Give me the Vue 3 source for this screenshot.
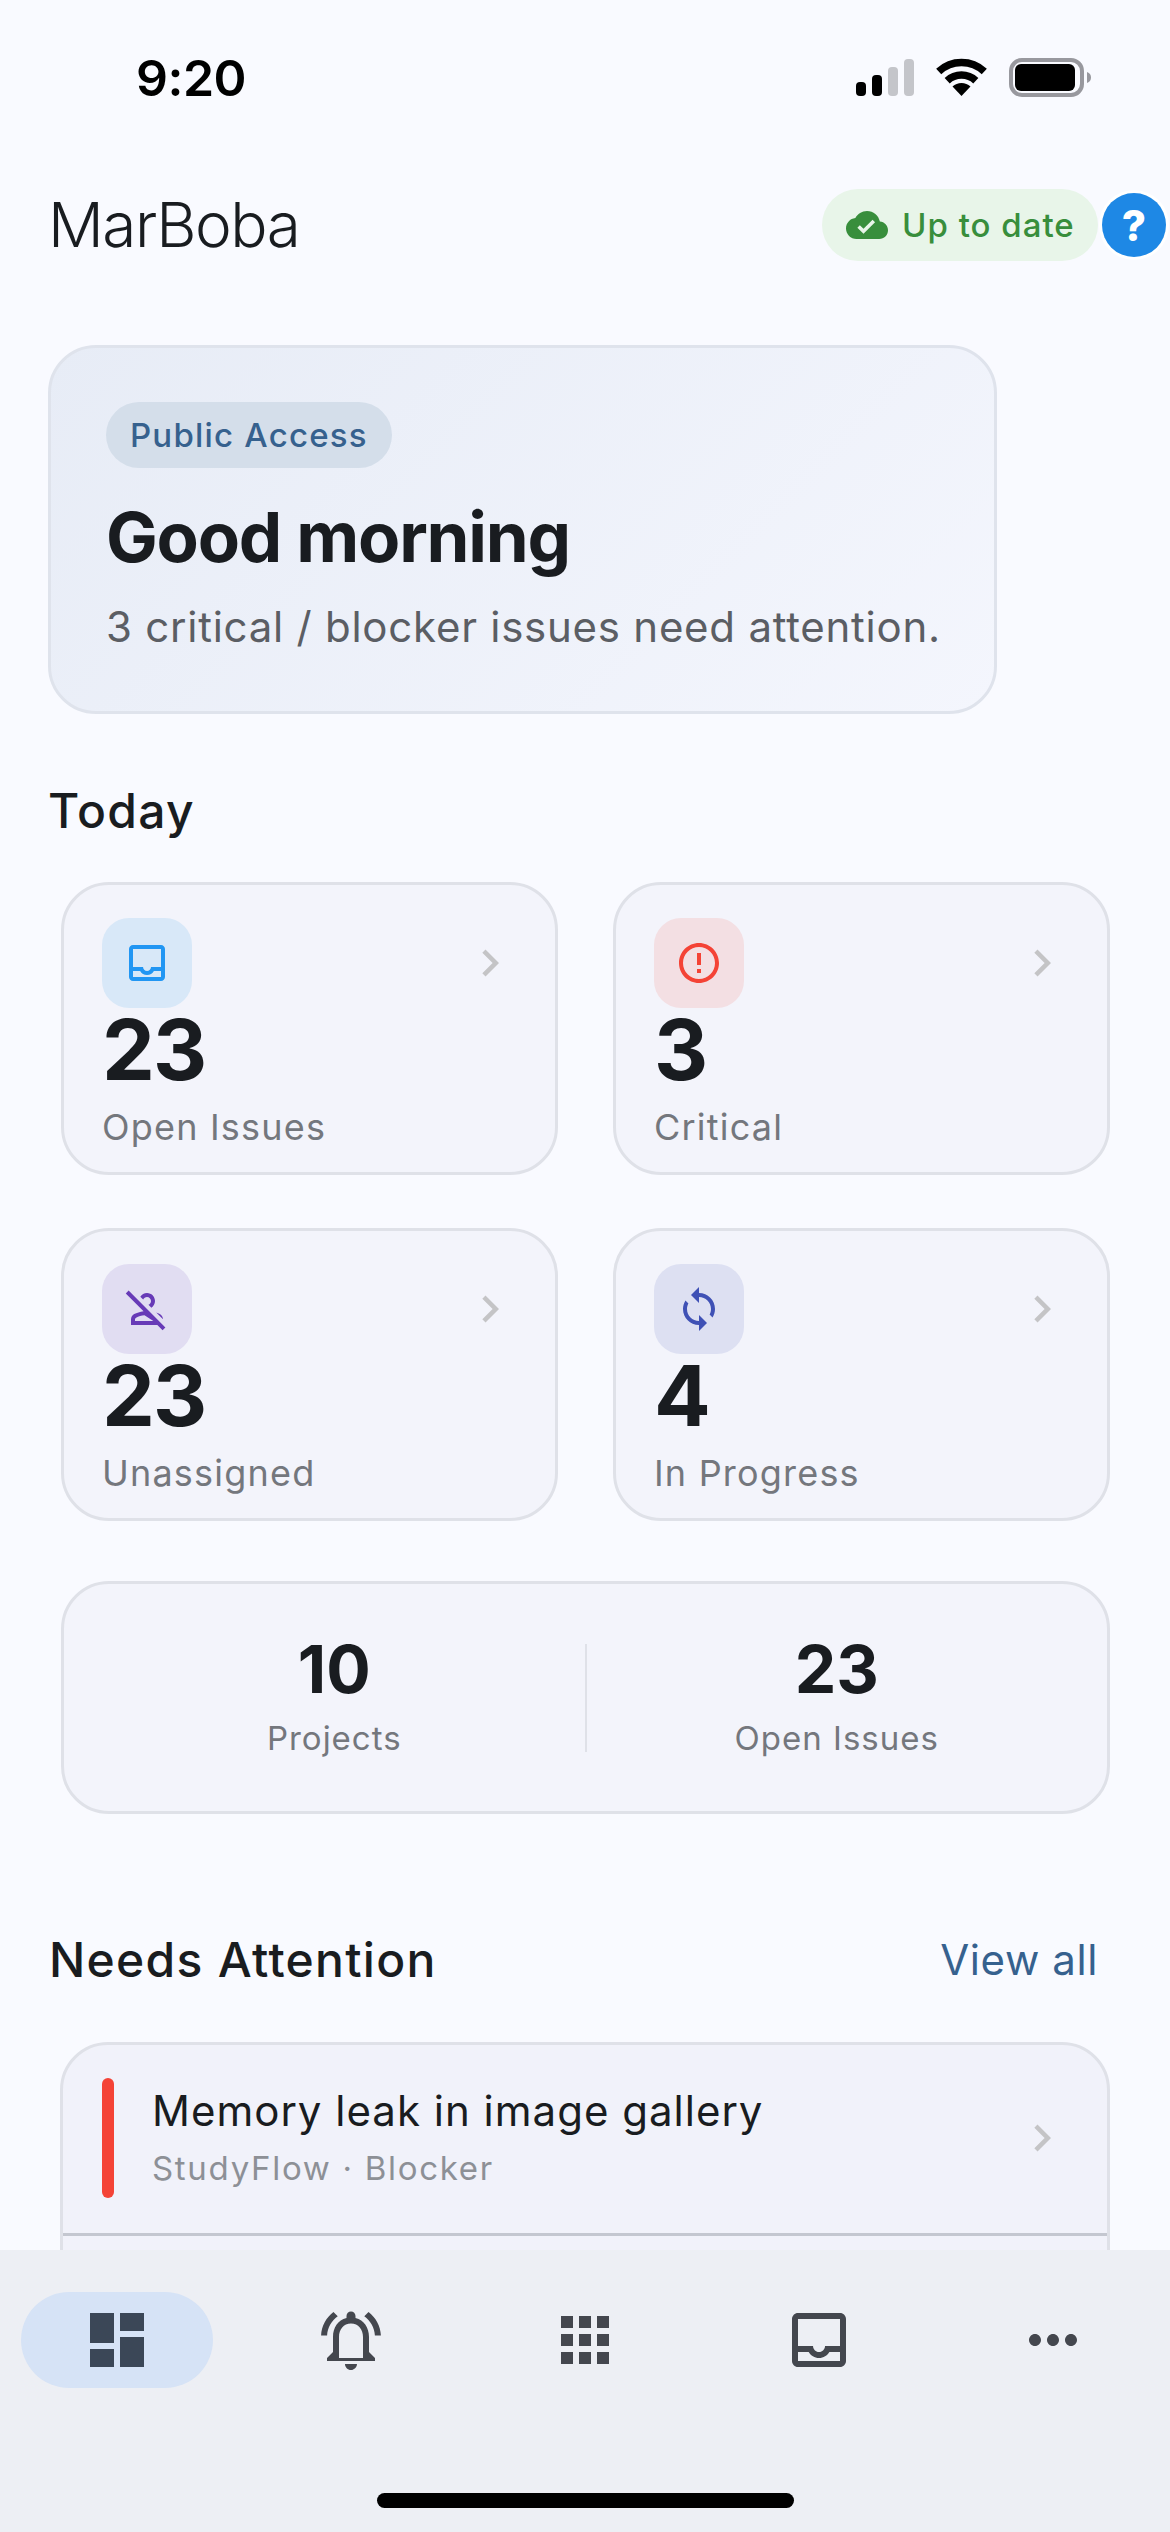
<script setup>
const cards = [
  { value: "23", label: "Open Issues", tone: "blue", path: "M19 3H5c-1.1 0-2 .9-2 2v14c0 1.1.9 2 2 2h14c1.1 0 2-.9 2-2V5c0-1.1-.9-2-2-2zm0 16H5v-3h3.56c.69 1.19 1.97 2 3.45 2s2.75-.81 3.45-2H19v3zm0-5h-4.99c0 1.1-.9 2-2 2s-2-.9-2-2H5V5h14v9z" },
  { value: "3", label: "Critical", tone: "red", path: "M11 15h2v2h-2zm0-8h2v6h-2zm.99-5C6.47 2 2 6.48 2 12s4.47 10 9.99 10C17.52 22 22 17.52 22 12S17.52 2 11.99 2zM12 20c-4.42 0-8-3.58-8-8s3.58-8 8-8 8 3.58 8 8-3.58 8-8 8z" },
  { value: "23", label: "Unassigned", tone: "purple", path: "M8.65 5.82C9.36 4.72 10.6 4 12 4c2.21 0 4 1.79 4 4 0 1.4-.72 2.64-1.82 3.35l-1.44-1.44C13.49 9.55 14 8.84 14 8c0-1.1-.9-2-2-2-.84 0-1.55.51-1.91 1.26L8.65 5.82zM20 17.17c-.02-1.1-.63-2.11-1.61-2.62-.54-.28-1.13-.54-1.77-.76L20 17.17zm1.19 4.02L2.81 2.81 1.39 4.22l8.89 8.89c-1.81.23-3.39.79-4.67 1.45C4.61 15.07 4 16.1 4 17.22V20h13.17l2.61 2.61 1.41-1.42zM6 18v-.78c0-.38.2-.72.52-.88 1.29-.66 2.69-1.09 4.21-1.24l.01-.01L15.17 18H6z" },
  { value: "4", label: "In Progress", tone: "indigo", path: "M12 4V1L8 5l4 4V6c3.31 0 6 2.69 6 6 0 1.01-.25 1.97-.7 2.8l1.46 1.46C19.54 15.03 20 13.57 20 12c0-4.42-3.58-8-8-8zm0 14c-3.31 0-6-2.69-6-6 0-1.01.25-1.97.7-2.8L5.24 7.74C4.46 8.97 4 10.43 4 12c0 4.42 3.58 8 8 8v3l4-4-4-4v3z" },
]

const tabs = [
  { active: true, tone: "dark", path: "M3 13h8V3H3v10zm0 8h8v-6H3v6zm10 0h8V11h-8v10zm0-18v6h8V3h-8z" },
  { path: "M7.58 4.08L6.15 2.65C3.75 4.48 2.17 7.3 2.03 10.5h2c.15-2.65 1.51-4.97 3.55-6.42zm12.39 6.42h2c-.15-3.2-1.73-6.02-4.12-7.85l-1.42 1.43c2.02 1.45 3.39 3.77 3.54 6.42zM18 11c0-3.07-1.64-5.64-4.5-6.32V4c0-.83-.67-1.5-1.5-1.5s-1.5.67-1.5 1.5v.68C7.63 5.36 6 7.92 6 11v5l-2 2v1h16v-1l-2-2v-5zm-6 11c.14 0 .27-.01.4-.04.65-.14 1.18-.58 1.44-1.18.1-.24.15-.5.15-.78h-4c.01 1.1.9 2 2.01 2zm4-4H8v-7c0-2.48 1.51-4.5 4-4.5s4 2.02 4 4.5v7z" },
  { path: "M4 8h4V4H4v4zm6 12h4v-4h-4v4zm-6 0h4v-4H4v4zm0-6h4v-4H4v4zm6 0h4v-4h-4v4zm6-10v4h4V4h-4zm-6 4h4V4h-4v4zm6 6h4v-4h-4v4zm0 6h4v-4h-4v4z" },
  { path: "M19 3H5c-1.1 0-2 .9-2 2v14c0 1.1.9 2 2 2h14c1.1 0 2-.9 2-2V5c0-1.1-.9-2-2-2zm0 16H5v-3h3.56c.69 1.19 1.97 2 3.45 2s2.75-.81 3.45-2H19v3zm0-5h-4.99c0 1.1-.9 2-2 2s-2-.9-2-2H5V5h14v9z" },
  { path: "M6 10c-1.1 0-2 .9-2 2s.9 2 2 2 2-.9 2-2-.9-2-2-2zm12 0c-1.1 0-2 .9-2 2s.9 2 2 2 2-.9 2-2-.9-2-2-2zm-6 0c-1.1 0-2 .9-2 2s.9 2 2 2 2-.9 2-2-.9-2-2-2z" },
]

const chevron = "M10 6L8.59 7.41 13.17 12l-4.58 4.59L10 18l6-6z"
</script>

<template>
  <div class="screen">
    <div class="status">
      <span class="time">9:20</span>
      <svg class="status-icons" width="236" height="40" viewBox="0 0 236 40">
        <rect x="0" y="24" width="10" height="14" rx="4" fill="#000" />
        <rect x="16" y="17" width="10" height="21" rx="4" fill="#000" />
        <rect x="32" y="9" width="10" height="29" rx="4" fill="#c4c5ca" />
        <rect x="48" y="1" width="10" height="37" rx="4" fill="#c4c5ca" />
        <path d="M82.7 13.5A33.5 33.5 0 0 1 128.3 13.5" fill="none" stroke="#000" stroke-width="7.5" />
        <path d="M91.2 22.7A21 21 0 0 1 119.8 22.7" fill="none" stroke="#000" stroke-width="7.5" />
        <path d="M105.5 38L96.5 28.5A13 13 0 0 1 114.5 28.5Z" fill="#000" />
        <rect x="155" y="2" width="71" height="35" rx="11" fill="none" stroke="#98989e" stroke-width="4" />
        <rect x="159" y="6" width="60" height="27" rx="6" fill="#000" />
        <path d="M231 14C234 15 235 17 235 19.5S234 24 231 25Z" fill="#98989e" />
      </svg>
    </div>

    <div class="main">
      <header class="header">
        <h1 class="brand">MarBoba</h1>
        <div class="header-right">
          <div class="sync">
            <svg width="42" height="42" viewBox="0 0 24 24" fill="#388e3c">
              <path d="M19.35 10.04C18.67 6.59 15.64 4 12 4 9.11 4 6.6 5.64 5.35 8.04 2.34 8.36 0 10.91 0 14c0 3.31 2.69 6 6 6h13c2.76 0 5-2.24 5-5 0-2.64-2.05-4.78-4.65-4.96zM10 17l-3.5-3.5 1.41-1.41L10 14.17l5.18-5.18 1.41 1.41L10 17z" />
            </svg>
            <span>Up to date</span>
          </div>
          <div class="help">?</div>
        </div>
      </header>

      <section class="hero">
        <span class="badge">Public Access</span>
        <h2 class="greeting">Good morning</h2>
        <p class="hero-sub">3 critical / blocker issues need attention.</p>
      </section>

      <h3 class="section-title today">Today</h3>

      <div class="grid">
        <div v-for="card in cards" :key="card.label" class="card">
          <div class="card-top">
            <div class="icon-box" :class="card.tone">
              <svg width="48" height="48" viewBox="0 0 24 24" fill="currentColor"><path :d="card.path" /></svg>
            </div>
            <svg class="chevron" width="54" height="54" viewBox="0 0 24 24" fill="currentColor"><path :d="chevron" /></svg>
          </div>
          <div class="card-value">{{ card.value }}</div>
          <div class="card-label">{{ card.label }}</div>
        </div>
      </div>

      <div class="totals">
        <div class="total">
          <div class="total-value">10</div>
          <div class="total-label">Projects</div>
        </div>
        <div class="total-divider"></div>
        <div class="total">
          <div class="total-value">23</div>
          <div class="total-label">Open Issues</div>
        </div>
      </div>

      <div class="section-head">
        <h3 class="section-title">Needs Attention</h3>
        <span class="view-all">View all</span>
      </div>

      <div class="issues">
        <div class="issue">
          <div class="issue-bar"></div>
          <div class="issue-text">
            <div class="issue-title">Memory leak in image gallery</div>
            <div class="issue-meta">StudyFlow · Blocker</div>
          </div>
          <svg class="chevron" width="54" height="54" viewBox="0 0 24 24" fill="currentColor"><path :d="chevron" /></svg>
        </div>
      </div>
    </div>

    <nav class="nav">
      <div class="tabs">
        <div v-for="(tab, i) in tabs" :key="i" class="tab">
          <div class="tab-inner" :class="{ active: tab.active }">
            <svg width="72" height="72" viewBox="0 0 24 24" fill="currentColor"><path :d="tab.path" /></svg>
          </div>
        </div>
      </div>
      <div class="home-indicator"></div>
    </nav>
  </div>
</template>

<style scoped>
.screen {
  width: 1170px;
  height: 2532px;
  display: flex;
  flex-direction: column;
  overflow: hidden;
  background: #f9faff;
  color: #191c20;
  font-family: Inter, "Noto Sans", sans-serif;
}
.status {
  height: 150px;
  flex: none;
  display: flex;
  justify-content: space-between;
  align-items: flex-start;
  padding: 58px 78px 0 136px;
  box-sizing: border-box;
}
.time {
  font-size: 50px;
  line-height: 40px;
  font-weight: 600;
  letter-spacing: -0.5px;
  color: #000;
}
.main {
  flex: 1;
  min-height: 0;
  overflow: hidden;
}
.header {
  height: 150px;
  display: flex;
  align-items: center;
  justify-content: space-between;
  padding: 0 4px 0 48px;
}
.brand {
  margin: 0;
  font-size: 62px;
  line-height: 80px;
  font-weight: 300;
  letter-spacing: -1.5px;
}
.header-right {
  display: flex;
  align-items: center;
  gap: 4px;
}
.sync {
  width: 276px;
  height: 72px;
  box-sizing: border-box;
  padding-left: 24px;
  display: flex;
  align-items: center;
  gap: 14px;
  border-radius: 36px;
  background: #e8f5e9;
  color: #388e3c;
  font-size: 33px;
  font-weight: 500;
  letter-spacing: 1px;
}
.help {
  width: 64px;
  height: 64px;
  border-radius: 50%;
  background: #1e88e5;
  box-shadow: 0 0 0 3px #fff;
  color: #fff;
  font-size: 42px;
  font-weight: 800;
  display: flex;
  align-items: center;
  justify-content: center;
}
.hero {
  width: fit-content;
  margin: 45px 0 0 48px;
  padding: 54px 53px 54px 55px;
  border: 3px solid #dfe3ec;
  border-radius: 48px;
  background: linear-gradient(135deg, #e7ecf6, #f4f6fd);
}
.badge {
  display: inline-block;
  height: 66px;
  line-height: 66px;
  padding: 0 24px;
  border-radius: 33px;
  background: #d4deea;
  color: #36618e;
  font-size: 33px;
  font-weight: 500;
  letter-spacing: 1.2px;
}
.greeting {
  margin: 27px 0 0;
  font-size: 69px;
  line-height: 84px;
  font-weight: 700;
  letter-spacing: -1.2px;
}
.hero-sub {
  margin: 18px 0 0;
  font-size: 42px;
  line-height: 60px;
  color: #5b5e64;
  letter-spacing: 0.75px;
}
.section-title {
  margin: 0;
  font-size: 48px;
  line-height: 60px;
  font-weight: 500;
  letter-spacing: 1.3px;
}
.today {
  margin: 67px 0 0 48px;
}
.grid {
  display: grid;
  grid-template-columns: 497px 497px;
  grid-auto-rows: 293px;
  gap: 53px 55px;
  margin: 41px 0 0 61px;
}
.card {
  box-sizing: border-box;
  padding: 33px 38px 0;
  border: 3px solid #dfe1e8;
  border-radius: 48px;
  background: #f3f4fb;
}
.card-top {
  display: flex;
  align-items: center;
  justify-content: space-between;
}
.icon-box {
  width: 90px;
  height: 90px;
  border-radius: 27px;
  display: flex;
  align-items: center;
  justify-content: center;
}
.icon-box.blue { background: #d8e8f8; color: #2196f3; }
.icon-box.red { background: #f3dfe3; color: #f44336; }
.icon-box.purple { background: #e1ddf2; color: #673ab7; }
.icon-box.indigo { background: #dde0f2; color: #3f51b5; }
.chevron {
  color: #c4c4c6;
  flex: none;
}
.card-value {
  font-size: 84px;
  line-height: 83px;
  font-weight: 700;
  letter-spacing: -2px;
}
.card-label {
  margin-top: 12px;
  font-size: 36px;
  line-height: 48px;
  color: #74777d;
  letter-spacing: 1.2px;
}
.totals {
  box-sizing: border-box;
  width: 1049px;
  height: 233px;
  margin: 60px 0 0 61px;
  padding: 52px 20px 0;
  display: flex;
  align-items: flex-start;
  border: 3px solid #dfe1e8;
  border-radius: 48px;
  background: #f3f4fb;
}
.total {
  flex: 1;
  text-align: center;
}
.total-divider {
  width: 2px;
  height: 108px;
  margin-top: 8px;
  background: #dfe1e8;
}
.total-value {
  font-size: 66px;
  line-height: 66px;
  font-weight: 700;
}
.total-label {
  margin-top: 14px;
  font-size: 33px;
  line-height: 44px;
  color: #74777d;
  letter-spacing: 1px;
}
.section-head {
  display: flex;
  align-items: center;
  justify-content: space-between;
  margin: 116px 0 0 49px;
  padding-right: 72px;
}
.view-all {
  font-size: 42px;
  line-height: 60px;
  color: #36618e;
  letter-spacing: 0.6px;
}
.issues {
  width: 1050px;
  box-sizing: border-box;
  margin: 52px 0 0 60px;
  padding-bottom: 60px;
  border: 3px solid #dfe1e8;
  border-radius: 48px;
  background: #f1f2fa;
}
.issue {
  height: 191px;
  box-sizing: border-box;
  padding: 33px 38px 0 39px;
  display: flex;
  align-items: flex-start;
  border-bottom: 3px solid #c4c7d0;
}
.issue-bar {
  width: 12px;
  height: 120px;
  border-radius: 6px;
  background: #f44336;
  flex: none;
}
.issue-text {
  flex: 1;
  margin: 5px 0 0 38px;
}
.issue-title {
  font-size: 42px;
  line-height: 56px;
  letter-spacing: 1px;
}
.issue-meta {
  margin-top: 7px;
  font-size: 33px;
  line-height: 44px;
  color: #8d9096;
  letter-spacing: 1.7px;
}
.issue .chevron {
  margin-top: 33px;
}
.nav {
  flex: none;
  height: 282px;
  background: #edeff4;
}
.tabs {
  display: flex;
  padding-top: 42px;
}
.tab {
  flex: 1;
  display: flex;
  justify-content: center;
}
.tab-inner {
  width: 192px;
  height: 96px;
  border-radius: 48px;
  display: flex;
  align-items: center;
  justify-content: center;
  color: #44474e;
}
.tab-inner.active {
  background: #d6e3f6;
  color: #3b4757;
}
.home-indicator {
  width: 417px;
  height: 15px;
  margin: 105px auto 0;
  border-radius: 8px;
  background: #000;
}
</style>

<style>
html, body {
  background: #f9faff;
}
</style>
